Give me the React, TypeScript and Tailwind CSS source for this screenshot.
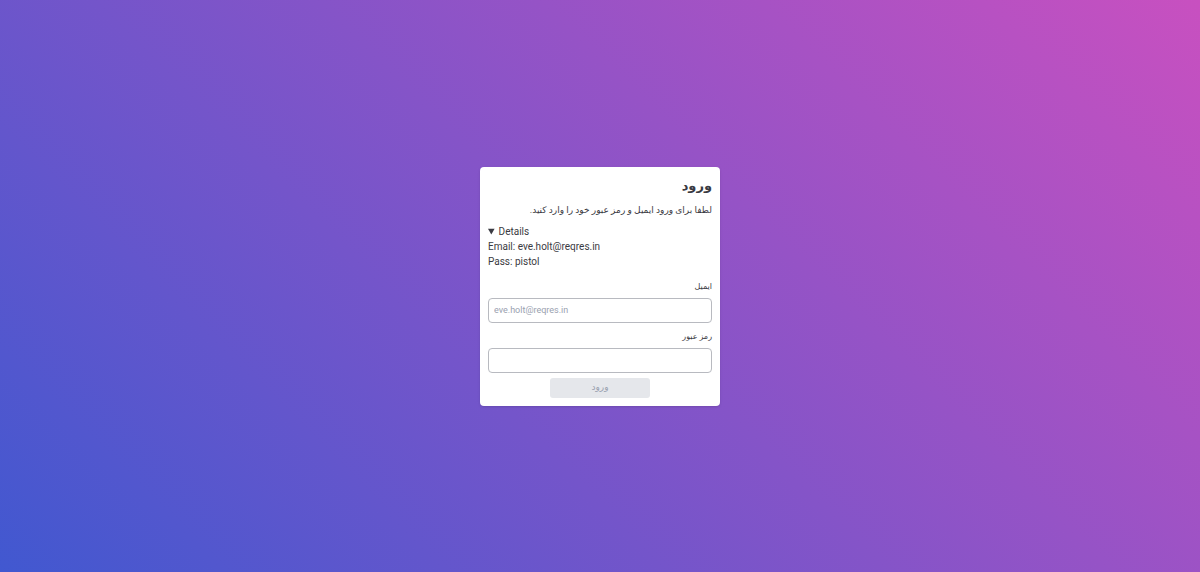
export default function App() {
  return (
    <main className="flex min-h-screen items-center justify-center bg-[linear-gradient(45deg,#4158d0,#c850c0)] pt-px font-['Roboto','DejaVu_Sans',sans-serif] text-[#3a3a42]">
      <form
        dir="rtl"
        onSubmit={(event) => event.preventDefault()}
        className="flex w-60 flex-col rounded-sm bg-white p-2 shadow-sm"
      >
        <h1 className="text-[13px] leading-[21px] font-bold">ورود</h1>
        <p className="mt-2 text-[9px] leading-3 whitespace-nowrap">
          لطفا برای ورود ایمیل و رمز عبور خود را وارد کنید.
        </p>
        <details open dir="ltr" className="mt-2 text-[10px] leading-[15px]">
          <summary>Details</summary>
          <p>Email: eve.holt@reqres.in</p>
          <p>Pass: pistol</p>
        </details>
        <label htmlFor="email" className="mt-3 text-[8px] leading-3">
          ایمیل
        </label>
        <input
          id="email"
          type="email"
          dir="ltr"
          placeholder="eve.holt@reqres.in"
          className="mt-[5px] h-[25px] w-full rounded-sm border border-[#b8bac0] px-[5px] pb-0.5 text-[9px] placeholder:text-gray-400"
        />
        <label htmlFor="password" className="mt-2 text-[8px] leading-3">
          رمز عبور
        </label>
        <input
          id="password"
          type="password"
          dir="ltr"
          className="mt-[5px] h-[25px] w-full rounded-sm border border-[#b8bac0] px-[5px] pb-0.5 text-[9px]"
        />
        <button
          type="submit"
          disabled
          className="mt-[5px] h-5 w-[100px] self-center rounded-[3px] bg-gray-200 text-[9px] text-gray-400"
        >
          ورود
        </button>
      </form>
    </main>
  );
}
